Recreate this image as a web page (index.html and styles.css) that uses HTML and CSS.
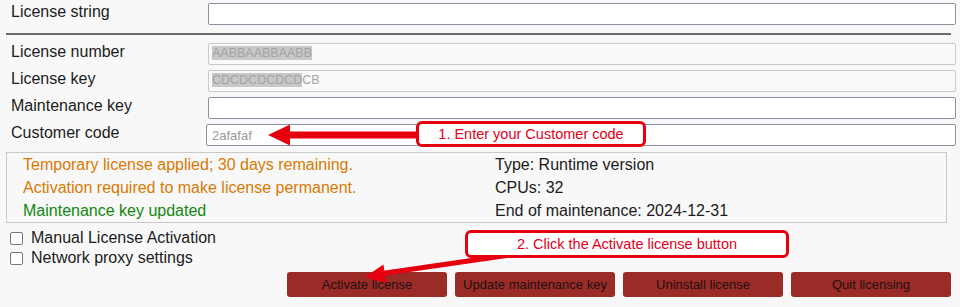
FILE: index.html
```html
<!DOCTYPE html>
<html lang="en">
<head>
  <meta charset="UTF-8" />
  <title>Licensing</title>
  <link rel="stylesheet" href="styles.css">
</head>
<body>
  <div class="panel">
    <div class="field-row">
      <label class="field-label">License string</label>
      <input type="text" class="field">
    </div>

    <div class="divider"></div>

    <div class="fields">
      <div class="field-row">
        <label class="field-label">License number</label>
        <div class="field field-disabled"><span class="sel">AABBAABBAABB</span></div>
      </div>
      <div class="field-row">
        <label class="field-label">License key</label>
        <div class="field field-disabled"><span class="sel">CDCDCDCDCD</span>CB</div>
      </div>
      <div class="field-row">
        <label class="field-label">Maintenance key</label>
        <input type="text" class="field">
      </div>
      <div class="field-row">
        <label class="field-label">Customer code</label>
        <input type="text" class="field field-code" value="2afafaf">
      </div>
    </div>

    <div class="status-box">
      <div class="status-col">
        <div class="status-line warn">Temporary license applied; 30 days remaining.</div>
        <div class="status-line warn">Activation required to make license permanent.</div>
        <div class="status-line ok">Maintenance key updated</div>
      </div>
      <div class="status-col">
        <div class="status-line">Type: Runtime version</div>
        <div class="status-line">CPUs: 32</div>
        <div class="status-line">End of maintenance: 2024-12-31</div>
      </div>
    </div>

    <div class="options">
      <label class="option"><input type="checkbox" class="check"> Manual License Activation</label>
      <label class="option"><input type="checkbox" class="check"> Network proxy settings</label>
    </div>

    <div class="actions">
      <button class="action-btn">Activate license</button>
      <button class="action-btn">Update maintenance key</button>
      <button class="action-btn">Uninstall license</button>
      <button class="action-btn">Quit licensing</button>
    </div>

    <!-- annotation overlay -->
    <svg class="arrows" width="960" height="307" viewBox="0 0 960 307">
      <line x1="287" y1="135" x2="420" y2="135" stroke="#e6000f" stroke-width="7" />
      <polygon points="268,135 290,124.5 290,145.5" fill="#e6000f" />
      <line x1="530" y1="252" x2="382" y2="273.5" stroke="#e6000f" stroke-width="5" />
      <polygon points="365,277 383.4,264.5 386.4,283.2" fill="#e6000f" />
    </svg>
    <div class="callout callout-1">1. Enter your Customer code</div>
    <div class="callout callout-2">2. Click the Activate license button</div>
  </div>
</body>
</html>
```

FILE: styles.css
```css
* {
  margin: 0;
  padding: 0;
  box-sizing: border-box;
}

body {
  background: #f8f8f8;
  font-family: 'Liberation Sans', Arial, sans-serif;
  color: #1c1c1c;
  width: 960px;
  height: 307px;
  overflow: hidden;
}

.panel {
  position: relative;
  padding: 3px 4px 0 0;
}

.field-row {
  display: grid;
  grid-template-columns: 208px 1fr;
  align-items: start;
}

.field-label {
  font-size: 16px;
  line-height: 18px;
  padding-left: 11px;
}

.field {
  display: block;
  width: 100%;
  height: 22px;
  border: 1px solid #908fa2;
  border-radius: 2px;
  background: #fff;
  font-family: 'Liberation Sans', Arial, sans-serif;
  font-size: 13px;
  padding: 0 3px;
  outline: none;
}

.field-disabled {
  border-color: #c9c9c9;
  background: #fafafa;
  color: #a3a3a3;
  font-size: 12.5px;
  line-height: 16px;
  padding-top: 1px;
  white-space: nowrap;
}

.field-disabled .sel {
  background: #c8c8c8;
}

.field-code {
  color: #9a9a9a;
  margin-left: -2px;
  width: calc(100% + 2px);
  padding-left: 5px;
}

.divider {
  margin: 8px 5px 8px 6px;
  border-top: 2px solid #6b6b6b;
}

.fields {
  display: grid;
  gap: 5px;
}

.status-box {
  display: grid;
  grid-template-columns: 472px 1fr;
  margin: 6px 9px 0 6px;
  padding-left: 16px;
  border: 1px solid #c9c9c9;
  background: #f8f8f8;
  font-size: 16px;
  line-height: 23px;
}

.status-line {
  white-space: nowrap;
}

.warn {
  color: #d97a04;
}

.ok {
  color: #12870f;
}

.options {
  padding: 5px 0 0 10px;
}

.option {
  display: flex;
  align-items: center;
  gap: 8px;
  font-size: 16px;
  line-height: 20px;
}

.check {
  appearance: none;
  width: 13px;
  height: 13px;
  border: 1px solid #767676;
  border-radius: 2px;
  background: #fff;
}

.actions {
  display: flex;
  justify-content: flex-end;
  gap: 8px;
  margin-top: 4px;
  padding-right: 5px;
}

.action-btn {
  width: 160px;
  height: 25px;
  border: none;
  border-radius: 3px;
  background: #9b2b27;
  color: #1c1111;
  font-family: 'Liberation Sans', Arial, sans-serif;
  font-size: 13px;
}

.arrows {
  position: absolute;
  top: 0;
  left: 0;
  pointer-events: none;
}

.callout {
  position: absolute;
  display: flex;
  align-items: center;
  justify-content: center;
  background: #fff;
  border: 3px solid #e6000f;
  border-radius: 6px;
  color: #e3001a;
  font-size: 14.5px;
  white-space: nowrap;
}

.callout-1 {
  left: 416px;
  top: 121px;
  width: 230px;
  height: 26px;
}

.callout-2 {
  left: 465px;
  top: 230px;
  width: 324px;
  height: 28px;
}
```
